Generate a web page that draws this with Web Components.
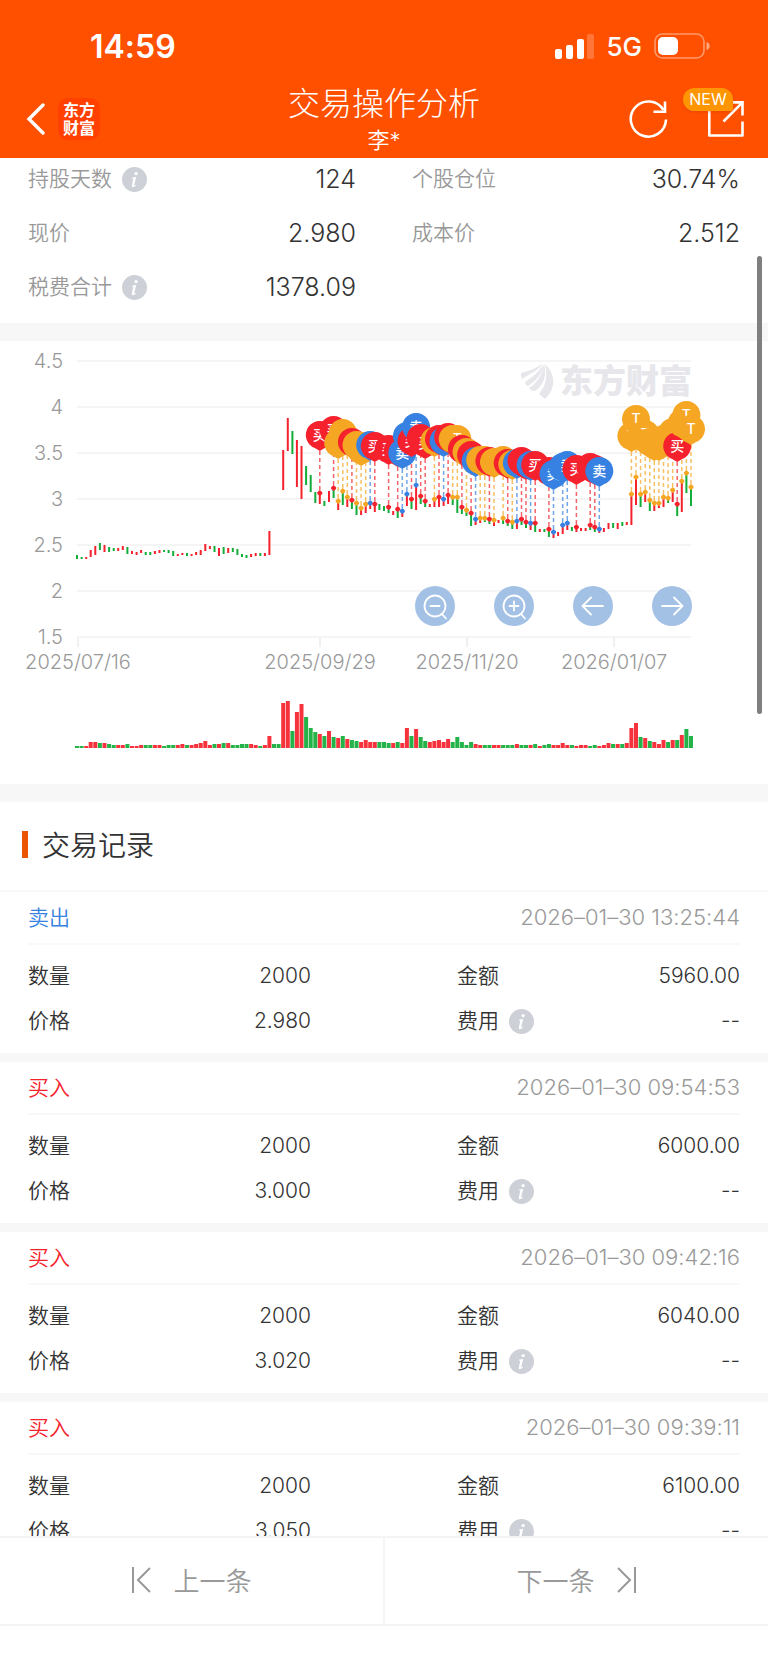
<!DOCTYPE html>
<html lang="zh-CN">
<head>
<meta charset="utf-8">
<meta name="viewport" content="width=device-width, initial-scale=1">
<title>交易操作分析</title>
<style>
  html, body {
    margin: 0;
    height: 100%;
  }

  body {
    font-family: Inter, "Noto Sans CJK SC", sans-serif;
    font-weight: 350;
    font-variant-ligatures: none;
    color: #333;
    background: #fff;
  }
</style>
</head>
<body>
<trade-app></trade-app>

<script>
class StatusBar extends HTMLElement {
  constructor() {
    super();
    this.attachShadow({ mode: "open" });
  }

  connectedCallback() {
    this.shadowRoot.innerHTML = `
      <style>
        :host {
          display: flex;
          justify-content: space-between;
          align-items: center;
          height: 76px;
          padding: 8px 58px 0 90px;
        }

        .time {
          font-size: 32px;
          font-weight: 600;
        }

        .right {
          display: flex;
          align-items: center;
          gap: 12px;
          font-size: 26px;
          font-weight: 500;
        }

        svg {
          display: block;
        }
      </style>
      <span class="time">14:59</span>
      <div class="right">
        <svg width="39" height="26" viewBox="0 0 39 26" fill="#fff">
          <rect x="0" y="16" width="7" height="10" rx="2"/>
          <rect x="11" y="12" width="7" height="14" rx="2"/>
          <rect x="22" y="6" width="7" height="20" rx="2"/>
          <rect x="32" y="1" width="7" height="25" rx="2" opacity=".22"/>
        </svg>
        <span>5G</span>
        <svg width="56" height="26" viewBox="0 0 56 26">
          <rect x="1" y="1" width="49" height="24" rx="7.5" fill="none" stroke="#fff" stroke-opacity=".42" stroke-width="1.6"/>
          <rect x="4" y="4" width="20" height="18" rx="5" fill="#fff"/>
          <path d="M52.5 9c2.5 1 3.200 2.600 3.200 4s-.7 3-3.200 4z" fill="#fff" opacity=".5"/>
        </svg>
      </div>
    `;
  }
}

class NavBar extends HTMLElement {
  constructor() {
    super();
    this.attachShadow({ mode: "open" });
  }

  connectedCallback() {
    this.shadowRoot.innerHTML = `
      <style>
        :host {
          display: grid;
          grid-template-columns: 1fr auto 1fr;
          align-items: center;
          padding: 0 24px 4px;
        }

        button {
          display: block;
          padding: 0;
          border: 0;
          background: none;
          color: inherit;
          font: inherit;
          cursor: pointer;
        }

        svg {
          display: block;
        }

        .left, .actions {
          display: flex;
          align-items: center;
        }

        .left {
          gap: 12px;
        }

        .logo {
          box-sizing: border-box;
          width: 42px;
          height: 42px;
          padding-top: 3px;
          border-radius: 10px;
          background: #ff4000;
          font-size: 16px;
          line-height: 18px;
          font-weight: 700;
          text-align: center;
        }

        .title {
          text-align: center;
        }

        h1 {
          margin: 0 0 2px;
          font-size: 32px;
          line-height: 40px;
          font-weight: 300;
        }

        .title p {
          margin: 0;
          font-size: 22px;
          line-height: 28px;
        }

        .actions {
          justify-content: flex-end;
          gap: 14px;
        }

        .share {
          position: relative;
          width: 61px;
        }

        .share svg {
          margin-left: auto;
        }

        .badge {
          position: absolute;
          left: 0;
          top: -13px;
          width: 50px;
          border-radius: 12px 12px 3px 12px;
          background: #ff9500;
          font-size: 16px;
          line-height: 23px;
          font-weight: 400;
          text-align: center;
          box-shadow: 0 1px 3px rgba(200, 60, 0, .4);
        }
      </style>
      <div class="left">
        <button aria-label="返回">
          <svg width="22" height="32" viewBox="0 0 22 32" fill="none" stroke="#fff" stroke-width="3.400" stroke-linecap="round">
            <path d="M19 2 5 16l14 14"/>
          </svg>
        </button>
        <div class="logo">东方<br>财富</div>
      </div>
      <div class="title">
        <h1>交易操作分析</h1>
        <p>李*</p>
      </div>
      <div class="actions">
        <button aria-label="刷新">
          <svg width="40" height="40" viewBox="0 0 40 40" fill="none" stroke="#fff" stroke-width="2.600">
            <path d="M37 20.500A17.600 17.600 0 1 1 34.500 11"/>
            <path d="M36 2.500V12.700H24.500"/>
          </svg>
        </button>
        <button class="share" aria-label="分享">
          <svg width="36" height="36" viewBox="0 0 36 36" fill="none" stroke="#fff" stroke-width="2.600" stroke-linejoin="round">
            <path d="M1.300 5V34.500H34.500V20.500"/>
            <path d="M22 1.400H34.500V14.500M34.500 1.400 15.500 20.500" stroke-linejoin="miter"/>
          </svg>
          <span class="badge">NEW</span>
        </button>
      </div>
    `;
  }
}

// Round grey "i" shown after a label
class InfoButton extends HTMLElement {
  constructor() {
    super();
    this.attachShadow({ mode: "open" });
  }

  connectedCallback() {
    this.shadowRoot.innerHTML = `
      <style>
        :host {
          display: block;
        }

        button {
          display: block;
          padding: 0;
          border: 0;
          background: none;
          cursor: pointer;
        }

        svg {
          display: block;
        }
      </style>
      <button aria-label="说明">
        <svg width="25" height="25" viewBox="0 0 25 25">
          <circle cx="12.500" cy="12.500" r="12.500" fill="#cdd0d6"/>
          <circle cx="14.100" cy="6.600" r="1.700" fill="#fff"/>
          <path d="M10 10.700q2.500-.3 4.300-1L12.300 17.600q-.3 1.500 1.700.2l.3.500q-4.800 3.600-4.500.2l1.300-5.700q.3-1.400-1.300-1.300z" fill="#fff"/>
        </svg>
      </button>
    `;
  }
}

class DataPair extends HTMLElement {
  constructor() {
    super();
    this.attachShadow({ mode: "open" });
  }

  connectedCallback() {
    const info = this.hasAttribute("info") ? "<info-button></info-button>" : "";

    this.shadowRoot.innerHTML = `
      <style>
        :host {
          display: flex;
          align-items: center;
          height: 30px;
          gap: 10px;
          font-size: 21px;
          line-height: 30px;
          white-space: nowrap;
        }

        .label {
          color: var(--label-color, #333);
        }

        .value {
          margin-left: auto;
          font-size: var(--value-size, 21px);
        }
      </style>
      <span class="label">${this.getAttribute("label")}</span>
      ${info}
      <span class="value"><slot></slot></span>
    `;
  }
}

class StockStats extends HTMLElement {
  constructor() {
    super();
    this.attachShadow({ mode: "open" });
  }

  connectedCallback() {
    this.shadowRoot.innerHTML = `
      <style>
        :host {
          display: grid;
          grid-template-columns: 1fr 1fr;
          gap: 24px 56px;
          padding: 6px 28px 21px;
          --label-color: #999;
          --value-size: 25px;
        }
      </style>
      <data-pair label="持股天数" info>124</data-pair>
      <data-pair label="个股仓位">30.74%</data-pair>
      <data-pair label="现价">2.980</data-pair>
      <data-pair label="成本价">2.512</data-pair>
      <data-pair label="税费合计" info>1378.09</data-pair>
    `;
  }
}

const RED = "#f5222d";
const GREEN = "#13ad3a";
const BLUE = "#3681e2";
const AMBER = "#f5a623";

// One entry per trading day: colour, high, low (chart units), volume.
// A dash means the day has no price bar.
const DAYS = `
g 555 559 2|g 557 559 2|r 557 559 2|r 550 557 6|r 546 555 6|g 543 550 5|r 545 552 5|g 547 552 4|g 548 551 3|r 548 551 3|
r 546 550 3|g 547 554 4|r 551 554 2|r 552 555 2|r 550 553 3|g 552 555 3|g 552 555 3|r 551 554 3|r 550 553 3|g 550 552 2|
g 550 553 3|g 551 556 3|r 554 556 3|r 553 555 4|g 553 556 3|r 554 556 3|r 552 555 4|r 550 555 5|r 544 551 7|r 546 549 3|
g 546 552 4|r 548 556 4|g 547 554 5|r 548 553 5|g 548 552 3|g 549 555 3|g 554 557 4|g 555 558 4|r 554 557 4|r 553 556 3|
g 553 556 2|r 553 556 3|r 531 555 12|g - - 4|g - - 4|r 450 490 45|r 418 451 47|g 431 454 17|r 440 487 36|r 446 499 44|
g 466 485 31|g 475 492 20|g 492 503 16|r 493 504 14|g 501 506 12|r 491 502 17|g 488 498 11|r 501 510 10|g 491 505 12|r 497 507 9|
g 500 509 8|g 503 515 7|r 508 515 6|r 504 513 8|r 503 509 6|r 504 512 6|g 504 510 6|g 506 511 6|g 507 513 5|r 511 515 5|
g 509 518 6|r 511 517 5|r 494 506 20|g 499 509 12|r 485 510 19|g 496 504 11|g 501 507 7|r 504 507 6|r 499 507 7|r 497 507 8|
r 499 506 6|r 495 504 9|g 497 505 6|g 497 513 11|g 507 514 6|g 510 516 3|g 513 526 6|r 519 525 4|r 518 523 3|g 518 522 3|
g 519 524 3|r 520 526 3|r 520 523 3|g 518 524 3|g 521 526 3|g 522 529 3|r 521 529 4|g 519 525 3|g 522 528 3|r 523 530 3|
g 523 532 4|r 529 532 2|g 529 532 3|g 529 537 4|r 532 538 3|r 532 536 3|r 525 534 5|r 523 530 3|g 527 531 3|r 527 532 2|
r 528 531 3|r 528 531 3|g 525 530 2|g 527 532 3|r 529 533 2|r 528 532 3|r 523 529 5|g 523 528 4|r 523 529 4|g 522 526 4|
r 522 525 5|r 494 525 20|r 477 505 25|g 494 507 11|r 492 502 10|g 500 511 7|r 503 511 6|r 503 508 4|r 497 507 8|g 498 503 6|
r 490 502 8|g 504 516 8|r 481 512 13|g 473 493 19|g 487 506 12`.trim().split("|").map(d => d.trim().split(" "));

// Day index and kind of trade: b = 买, s = 卖, t = T
const TRADES = `53b 56b 57t 58t 59t 60b 61t 62t 63t 64s 65b 68b 70b 71s 72s 73b 74s 75b 76b 78t 79b 80s 81b 82t 83t
84b 85t 86b 87s 88t 89t 90b 91t 93t 94b 95t 96s 97b 98b 99s 100b 103b 104s 106s 107s 109b 112b 113b 114s
121t 122t 123t 124t 125t 126t 127t 128t 129t 130t 131b 132t 133t 134t`.split(/\s+/);

const KINDS = {
  b: { color: RED, text: "买" },
  s: { color: BLUE, text: "卖" },
  t: { color: AMBER, text: "T" },
};

class TradeChart extends HTMLElement {
  constructor() {
    super();
    this.attachShadow({ mode: "open" });
  }

  dayX(i) {
    return Math.round((77 + i * 4.582) * 10) / 10;
  }

  grid() {
    return ["4.5", "4", "3.5", "3", "2.5", "2", "1.5"].map((v, i) => {
      const y = 361 + i * 46;
      return `
        <line x1="77" x2="691" y1="${y}" y2="${y}" stroke="#f5f5f5" stroke-width="2"/>
        <text x="63" y="${y + 7}" text-anchor="end">${v}</text>`;
    }).join("");
  }

  dates() {
    const ticks = [[78, "2025/07/16"], [320, "2025/09/29"], [467, "2025/11/20"], [614, "2026/01/07"]];
    return ticks.map(([x, date]) => `
      <line x1="${x}" x2="${x}" y1="637" y2="647" stroke="#f0f0f0" stroke-width="2"/>
      <text x="${x}" y="669" text-anchor="middle">${date}</text>`).join("");
  }

  bars() {
    return DAYS.map(([c, high, low, vol], i) => {
      const x = this.dayX(i);
      const fill = c === "r" ? RED : GREEN;
      const price = high === "-" ? "" :
        `<rect x="${x - 1}" y="${high}" width="2" height="${low - high}" fill="${fill}"/>`;
      return `${price}<rect x="${x - 2}" y="${748 - vol}" width="4" height="${vol}" fill="${fill}" opacity=".93"/>`;
    }).join("");
  }

  pins() {
    let lines = "";
    let pins = "";
    const points = TRADES.map(t => {
      const i = parseInt(t, 10);
      return { x: this.dayX(i), y: Number(DAYS[i][1]), ...KINDS[t.slice(-1)] };
    });

    points.forEach(({ x, y, color, text }, n) => {
      const cy = y - 58;
      // A label that a later pin lies over is left out
      const covered = points.slice(n + 1).some(p => Math.hypot(p.x - x, p.y - y) < 9);
      lines += `
        <line x1="${x}" x2="${x}" y1="${cy + 16}" y2="${y}" stroke="${color}" stroke-width="1.500" stroke-dasharray="4 3" opacity=".7"/>
        <path d="M${x} ${y - 3}l2.500 2.200v1.800L${x} ${y + 3}l-2.500-2v-1.800z" fill="${color}"/>`;
      pins += `<path d="M${x} ${cy + 16}l-5-3A14 14 0 1 1 ${x + 5} ${cy + 13}z" fill="${color}"/>`;
      if (!covered) {
        pins += `<text class="pin" x="${x}" y="${cy + 5}">${text}</text>`;
      }
    });
    return lines + pins;
  }

  connectedCallback() {
    this.shadowRoot.innerHTML = `
      <style>
        :host {
          display: block;
          position: relative;
        }

        .plot {
          display: block;
          width: 100%;
          font-size: 20px;
        }

        .plot text {
          fill: #999;
        }

        .plot .pin {
          fill: #fff;
          font-size: 14px;
          font-weight: 500;
          text-anchor: middle;
        }

        .plot .brand {
          fill: #e6e6eb;
          font-size: 33px;
          font-weight: 900;
        }

        .tools {
          position: absolute;
          top: 245px;
          right: 76px;
          display: flex;
          gap: 39px;
        }

        button {
          display: block;
          width: 40px;
          height: 40px;
          padding: 0;
          border: 0;
          border-radius: 50%;
          background: rgba(156, 188, 227, .93);
          cursor: pointer;
        }

        .tools svg {
          display: block;
          fill: none;
          stroke: #fff;
          stroke-width: 1.800;
          stroke-linecap: round;
        }
      </style>
      <svg class="plot" viewBox="0 341 768 443">
        ${this.grid()}
        ${this.dates()}
        <g fill="#e6e6eb">
          <path d="M521 373c7-2 14-4 21-9-3 6-9 8-20 15-1-2-1-4-1-6z"/>
          <path d="M525 382c7-5 14-9 18-18 0 9-6 16-15 22-2-1-3-2-3-4z"/>
          <path d="M529 388c7-4 13-12 15-24 4 14-3 23-9 27-3 0-5-1-6-3z"/>
          <path d="M545 364c10 9 12 24 0 35l-6-5c7-8 9-19 6-30z"/>
        </g>
        <text class="brand" x="560" y="393">东方财富</text>
        ${this.bars()}
        ${this.pins()}
      </svg>
      <div class="tools">
        <button aria-label="缩小"><svg width="40" height="40" viewBox="0 0 40 40"><circle cx="20" cy="20" r="10.500"/><path d="M15.500 20h9M27 28l4 4.500"/></svg></button>
        <button aria-label="放大"><svg width="40" height="40" viewBox="0 0 40 40"><circle cx="20" cy="20" r="10.500"/><path d="M15.500 20h9M20 15.500v9M27 28l4 4.500"/></svg></button>
        <button aria-label="向左"><svg width="40" height="40" viewBox="0 0 40 40"><path d="M30 20H9.500M18 11.500 9.500 20l8.500 8.500"/></svg></button>
        <button aria-label="向右"><svg width="40" height="40" viewBox="0 0 40 40"><path d="M10 20h20.500M22 11.500l8.500 8.500-8.500 8.500"/></svg></button>
      </div>
    `;
  }
}

class TradeRecord extends HTMLElement {
  constructor() {
    super();
    this.attachShadow({ mode: "open" });
  }

  connectedCallback() {
    const get = name => this.getAttribute(name);
    const side = get("side");

    this.shadowRoot.innerHTML = `
      <style>
        :host {
          display: block;
          padding: 0 28px 17px;
          border-bottom: 9px solid #f7f7f7;
        }

        header {
          display: flex;
          justify-content: space-between;
          border-bottom: 2px solid #f9f9f9;
          font-size: 21px;
          line-height: 51px;
        }

        .buy {
          color: #f5222d;
        }

        .sell {
          color: #3681e2;
        }

        time {
          color: #999;
          font-size: 22px;
        }

        .rows {
          display: grid;
          grid-template-columns: 1fr 1fr;
          gap: 15px 146px;
          padding-top: 16px;
        }
      </style>
      <header>
        <span class="${side}">${side === "buy" ? "买入" : "卖出"}</span>
        <time>${get("time")}</time>
      </header>
      <div class="rows">
        <data-pair label="数量">${get("count")}</data-pair>
        <data-pair label="金额">${get("amount")}</data-pair>
        <data-pair label="价格">${get("price")}</data-pair>
        <data-pair label="费用" info>--</data-pair>
      </div>
    `;
  }
}

class SectionTitle extends HTMLElement {
  constructor() {
    super();
    this.attachShadow({ mode: "open" });
  }

  connectedCallback() {
    this.shadowRoot.innerHTML = `
      <style>
        :host {
          display: flex;
          align-items: center;
          gap: 14px;
          height: 84px;
          padding: 0 22px 4px;
          border-bottom: 2px solid #f9f9f9;
        }

        i {
          width: 6px;
          height: 27px;
          background: #ea5504;
        }

        h2 {
          margin: 0;
          font-size: 28px;
          font-weight: inherit;
        }
      </style>
      <i></i>
      <h2><slot></slot></h2>
    `;
  }
}

class PagerBar extends HTMLElement {
  constructor() {
    super();
    this.attachShadow({ mode: "open" });
  }

  connectedCallback() {
    this.shadowRoot.innerHTML = `
      <style>
        :host {
          display: flex;
          margin-bottom: 36px;
          border: solid #f4f4f4;
          border-width: 2px 0;
        }

        button {
          box-sizing: border-box;
          display: flex;
          flex: 1;
          justify-content: center;
          align-items: center;
          gap: 22px;
          height: 86px;
          padding: 0 0 3px;
          border: 0;
          background: none;
          color: #999;
          font: inherit;
          font-size: 26px;
          cursor: pointer;
        }

        button + button {
          border-left: 2px solid #f4f4f4;
        }

        svg {
          fill: none;
          stroke: #999;
          stroke-width: 2;
        }
      </style>
      <button>
        <svg width="20" height="26" viewBox="0 0 20 26"><path d="M2 0v26M19 1 7 13l12 12"/></svg>
        上一条
      </button>
      <button>
        下一条
        <svg width="20" height="26" viewBox="0 0 20 26"><path d="M18 0v26M1 1l12 12L1 25"/></svg>
      </button>
    `;
  }
}

class TradeApp extends HTMLElement {
  constructor() {
    super();
    this.attachShadow({ mode: "open" });
  }

  connectedCallback() {
    this.shadowRoot.innerHTML = `
      <style>
        :host {
          display: flex;
          flex-direction: column;
          height: 100vh;
        }

        .top {
          background: #ff5000;
          color: #fff;
        }

        main {
          position: relative;
          flex: 1;
          min-height: 0;
          overflow: hidden;
        }

        .band {
          height: 18px;
          background: #f7f7f7;
        }

        /* scroll position indicator over the content */
        .thumb {
          position: absolute;
          top: 98px;
          right: 6px;
          width: 5px;
          height: 458px;
          border-radius: 3px;
          background: #7f7f7f;
        }
      </style>
      <div class="top">
        <status-bar></status-bar>
        <nav-bar></nav-bar>
      </div>
      <main>
        <stock-stats></stock-stats>
        <div class="band"></div>
        <trade-chart></trade-chart>
        <div class="band"></div>
        <section-title>交易记录</section-title>
        <trade-record side="sell" time="2026–01–30 13:25:44" count="2000" amount="5960.00" price="2.980"></trade-record>
        <trade-record side="buy" time="2026–01–30 09:54:53" count="2000" amount="6000.00" price="3.000"></trade-record>
        <trade-record side="buy" time="2026–01–30 09:42:16" count="2000" amount="6040.00" price="3.020"></trade-record>
        <trade-record side="buy" time="2026–01–30 09:39:11" count="2000" amount="6100.00" price="3.050"></trade-record>
        <div class="thumb"></div>
      </main>
      <pager-bar></pager-bar>
    `;
  }
}

customElements.define("status-bar", StatusBar);
customElements.define("nav-bar", NavBar);
customElements.define("info-button", InfoButton);
customElements.define("data-pair", DataPair);
customElements.define("stock-stats", StockStats);
customElements.define("trade-chart", TradeChart);
customElements.define("trade-record", TradeRecord);
customElements.define("section-title", SectionTitle);
customElements.define("pager-bar", PagerBar);
customElements.define("trade-app", TradeApp);
</script>
</body>
</html>
